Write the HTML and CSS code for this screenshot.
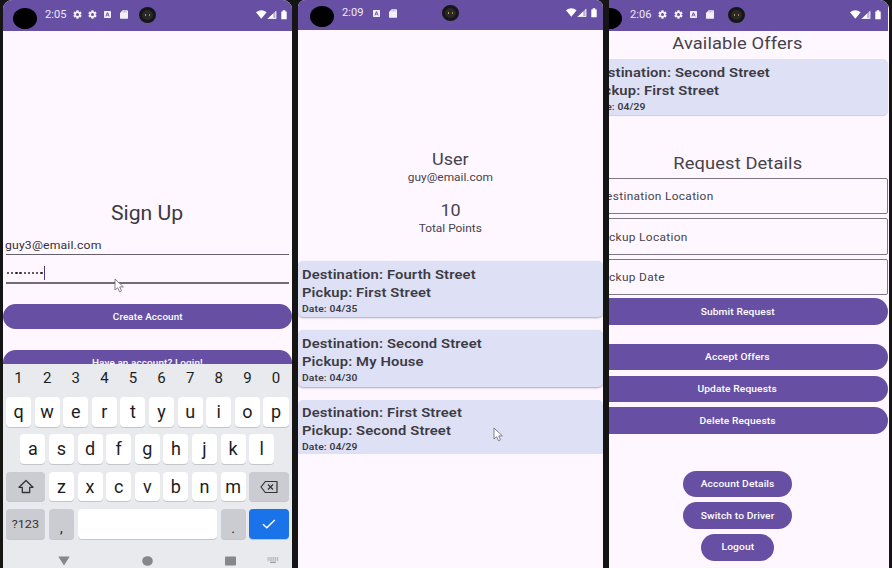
FILE: index.html
```html
<!DOCTYPE html>
<html lang="en">
<head>
<meta charset="utf-8">
<title>Ride share screens</title>
<link rel="stylesheet" href="styles.css">
</head>
<body>
<svg width="0" height="0" class="defs">
  <symbol id="gear" viewBox="1.5 1.5 21 21" preserveAspectRatio="none"><path fill-rule="evenodd" d="M19.400 13a7.500 7.500 0 0 0 0-2l2.100-1.600c.2-.2.2-.4.1-.6l-2-3.500c-.1-.2-.4-.3-.6-.2l-2.500 1a7 7 0 0 0-1.700-1L14.400 2.400a.5.5 0 0 0-.5-.4h-4a.5.5 0 0 0-.5.4L9.100 5.100a7 7 0 0 0-1.700 1l-2.500-1c-.2-.1-.5 0-.6.200l-2 3.500c-.1.200-.1.500.1.600L4.500 11a7.500 7.500 0 0 0 0 2l-2.100 1.600c-.2.200-.2.400-.1.600l2 3.500c.1.200.4.300.6.200l2.500-1a7 7 0 0 0 1.700 1l.3 2.700c0 .2.2.4.5.4h4c.3 0 .5-.2.5-.4l.4-2.700a7 7 0 0 0 1.700-1l2.500 1c.2.100.5 0 .6-.2l2-3.500c.1-.2.100-.5-.1-.6zM12 15.500a3.500 3.500 0 1 1 0-7 3.500 3.500 0 0 1 0 7z"/></symbol>
  <symbol id="badge" viewBox="2 2 20 20" preserveAspectRatio="none"><path fill-rule="evenodd" d="M4 2h16a2 2 0 0 1 2 2v16a2 2 0 0 1-2 2H4a2 2 0 0 1-2-2V4a2 2 0 0 1 2-2zm6.500 4L6 18h2.500l1-3h5l1 3H18L13.500 6zm1.500 3 1.500 4h-3z"/></symbol>
  <symbol id="sd" viewBox="0 0 8 9" preserveAspectRatio="none"><path d="M2.600.3h4.500a.9.900 0 0 1 .9.900v6.700a.9.900 0 0 1-.9.900H.9A.9.900 0 0 1 0 7.900V3z"/><path d="M3 1v1.400M4.500 1v1.400M6 1v1.400" stroke="#6750a4" stroke-width=".4"/></symbol>
  <symbol id="signals" viewBox="0 0 32 10"><path d="M0 2.200Q5.300-1.500 10.600 2.200L5.300 8.800z"/><path d="M11.700 8.800 20.200.5V8.800z" opacity=".55"/><path d="M11.700 8.800 17.200 3.400V8.800zM19.500 1.200h.8v7.600h-.8zM11.700 8h8.500v.8h-8.500z"/><path d="M25.300 1.400h1.400V.3h2.600v1.100h1.400v7.900h-5.400z"/></symbol>
  <symbol id="pointer" viewBox="0 0 11 15"><path d="M1 1v11l2.700-2.300 1.800 4.100 2-.9-1.800-4h3.700z" fill="#fff" stroke="#666" stroke-width=".8"/></symbol>
</svg>

<main class="stage">
  <section class="phone signup">
    <header class="status">
      <i class="hole"></i><span class="clock"><b>2:05</b></span>
      <svg class="ic"><use href="#gear"/></svg><svg class="ic"><use href="#gear"/></svg><svg class="ic small"><use href="#badge"/></svg><svg class="ic sd"><use href="#sd"/></svg>
      <i class="cam"></i><svg class="signals"><use href="#signals"/></svg>
    </header>
    <div class="form">
      <h1><span>Sign Up</span></h1>
      <div class="input email"><span>guy3@email.com</span></div>
      <div class="input password"><i></i><i></i><i></i><i></i><i></i><i></i><i></i><i></i><i></i><em></em></div>
      <button class="btn create"><span>Create Account</span></button>
      <button class="btn"><span>Have an account? Login!</span></button>
    </div>
    <div class="keyboard">
      <div class="row digits"><kbd>1</kbd><kbd>2</kbd><kbd>3</kbd><kbd>4</kbd><kbd>5</kbd><kbd>6</kbd><kbd>7</kbd><kbd>8</kbd><kbd>9</kbd><kbd>0</kbd></div>
      <div class="row"><kbd>q</kbd><kbd>w</kbd><kbd>e</kbd><kbd>r</kbd><kbd>t</kbd><kbd>y</kbd><kbd>u</kbd><kbd>i</kbd><kbd>o</kbd><kbd>p</kbd></div>
      <div class="row middle"><kbd>a</kbd><kbd>s</kbd><kbd>d</kbd><kbd>f</kbd><kbd>g</kbd><kbd>h</kbd><kbd>j</kbd><kbd>k</kbd><kbd>l</kbd></div>
      <div class="row"><kbd class="wide grey"><svg width="18" height="16" viewBox="0 0 18 16"><path d="M9 1.500 2 8.300h3.300v5.200h7.400V8.300H16z" fill="none" stroke="#333" stroke-width="1.300" stroke-linejoin="round"/></svg></kbd><kbd>z</kbd><kbd>x</kbd><kbd>c</kbd><kbd>v</kbd><kbd>b</kbd><kbd>n</kbd><kbd>m</kbd><kbd class="wide grey"><svg width="18" height="14" viewBox="0 0 18 14"><path d="M5.300 1.500H17v11H5.300L1 7zM8 4.500l5 5M13 4.500l-5 5" fill="none" stroke="#333" stroke-width="1.200" stroke-linejoin="round"/></svg></kbd></div>
      <div class="row"><kbd class="wide grey sym"><span>?123</span></kbd><kbd class="grey punct">,</kbd><kbd class="space"></kbd><kbd class="grey punct">.</kbd><kbd class="wide enter"><svg width="14" height="10" viewBox="0 0 14 10"><path d="M1 5.200 4.800 8.700 12.800 1" fill="none" stroke="#fff" stroke-width="1.500"/></svg></kbd></div>
      <nav class="nav">
        <svg width="12" height="10" viewBox="0 0 12 10"><path d="M.3.500h11.400L6 9.600z"/></svg>
        <svg width="11" height="10" viewBox="0 0 11 10"><ellipse cx="5.500" cy="5" rx="5.300" ry="4.800"/></svg>
        <svg width="11" height="10" viewBox="0 0 11 10"><rect y=".5" width="11" height="9" rx=".8"/></svg>
        <svg width="12" height="7" viewBox="0 0 12 7"><path d="M.5 1h11M.5 3h11" stroke="#85878a" stroke-width="1.100" stroke-dasharray="1.200 .7"/><path d="M3 5.300h6" stroke="#85878a"/></svg>
      </nav>
    </div>
    <svg class="pointer one"><use href="#pointer"/></svg>
  </section>

  <section class="phone user">
    <header class="status">
      <i class="hole"></i><span class="clock"><b>2:09</b></span>
      <svg class="ic small"><use href="#badge"/></svg><svg class="ic sd"><use href="#sd"/></svg>
      <i class="cam"></i><svg class="signals"><use href="#signals"/></svg>
    </header>
    <div class="profile">
      <h2><span>User</span></h2>
      <p><span>guy@email.com</span></p>
      <h2><span>10</span></h2>
      <p><span>Total Points</span></p>
    </div>
    <div class="cards">
      <article class="card"><strong>Destination: Fourth Street</strong><strong>Pickup: First Street</strong><small>Date: 04/35</small></article>
      <article class="card"><strong>Destination: Second Street</strong><strong>Pickup: My House</strong><small>Date: 04/30</small></article>
      <article class="card cut"><strong>Destination: First Street</strong><strong>Pickup: Second Street</strong><small>Date: 04/29</small></article>
    </div>
    <svg class="pointer two"><use href="#pointer"/></svg>
  </section>

  <section class="phone offers">
    <div class="screen">
      <header class="status">
        <i class="hole"></i><span class="clock"><b>2:06</b></span>
        <svg class="ic"><use href="#gear"/></svg><svg class="ic"><use href="#gear"/></svg><svg class="ic small"><use href="#badge"/></svg><svg class="ic sd"><use href="#sd"/></svg>
        <i class="cam"></i><svg class="signals"><use href="#signals"/></svg>
      </header>
      <h2 class="avail"><span>Available Offers</span></h2>
      <article class="card"><strong>Destination: Second Street</strong><strong>Pickup: First Street</strong><small>Date: 04/29</small></article>
      <h2 class="request"><span>Request Details</span></h2>
      <div class="fields">
        <div class="field"><span>Destination Location</span></div>
        <div class="field"><span>Pickup Location</span></div>
        <div class="field"><span>Pickup Date</span></div>
      </div>
      <button class="btn submit"><span>Submit Request</span></button>
      <div class="group">
        <button class="btn"><span>Accept Offers</span></button>
        <button class="btn"><span>Update Requests</span></button>
        <button class="btn"><span>Delete Requests</span></button>
      </div>
      <div class="group account">
        <button class="btn"><span>Account Details</span></button>
        <button class="btn"><span>Switch to Driver</span></button>
        <button class="btn logout"><span>Logout</span></button>
      </div>
    </div>
  </section>
</main>
</body>
</html>
```
FILE: styles.css
```css
* { box-sizing: border-box; }
body { margin: 0; background: #151516; font-family: Roboto, sans-serif; color: #46434b; }
h1, h2, p { margin: 0; font-weight: 400; text-align: center; }
.defs { display: block; position: absolute; }
.stage {
  display: grid; grid-template-columns: 289px 304.500px 280px; column-gap: 6.400px;
  width: 892px; height: 568px; padding-left: 3px; overflow: hidden;
}
.phone { position: relative; height: 568px; overflow: hidden; background: #fef7ff; border-radius: 9px 9px 0 0; }
.user { border-radius: 7px 7px 0 0; }
.offers { border-radius: 0 9px 0 0; margin-left: -.7px; }
.screen { width: 302px; margin-left: -22.200px; }

.btn span, .sym span { display: inline-block; transform: scaleX(1.100); }
h1 span, h2 span, p span { display: inline-block; transform: scaleX(1.060); }
.profile p span { transform: scaleX(1.080); }
.field span, .email span, .clock b, .card strong, .card small { display: inline-block; transform: scaleX(1.110); transform-origin: left center; }

.status { position: relative; display: flex; align-items: center; height: 31px; background: #6750a4; padding: 0 4px 2px 10px; }
.user .status { height: 30px; padding: 0 5px 4px 12px; }
.offers .status { padding: 0 6px 2px 11.500px; }
.hole { width: 24px; height: 21px; border-radius: 50%; background: #000; margin-top: 7px; flex: none; }
.clock { width: 22px; margin-left: 8px; color: #eee9f7; font-size: 10px; line-height: 12px; }
.clock b { font-weight: 400; }
.ic { width: 9px; height: 9px; margin-left: 6.700px; fill: #f3effa; flex: none; }
.ic.small { width: 7px; height: 7px; margin-left: 7.300px; }
.clock + .ic { margin-left: 5.500px; }
.offers .clock + .ic { margin-left: 6.500px; }
.clock + .ic.small { margin-left: 9px; }
.ic.sd { width: 8px; height: 9px; margin-left: 8.500px; }
.signals { width: 32px; height: 10px; margin-left: auto; fill: #fff; }
.cam { position: absolute; left: 50%; top: 7px; width: 17px; height: 16px; margin-left: -9px; border-radius: 50%; border: 3px solid #161616; background: radial-gradient(circle at 3.500px 5px, #b29869 0 .5px, transparent 1px), radial-gradient(circle at 7.500px 5px, #bb7656 0 .5px, transparent 1px), #292929; }
.user .cam { top: 5px; }

.btn { display: flex; align-items: center; justify-content: center; width: 100%; height: 26.300px; padding: 0; border: 0; border-radius: 14px; background: #6750a4; color: #fff; font: 500 9.300px/12px Roboto, sans-serif; letter-spacing: .1px; }

.form { padding-top: 169.500px; height: 333px; overflow: hidden; }
.form h1 { font-size: 20px; line-height: 25px; color: #3c3a42; }
.input { margin: 0 3px; }
.email { height: 29.500px; padding-top: 13.500px; border-bottom: 1px solid #65606c; color: #333037; font-size: 11px; line-height: 14px; letter-spacing: .15px; }
.email span { margin-left: -.8px; }
.password { display: flex; align-items: center; height: 29px; padding-top: 9px; border-bottom: 2px solid #716c78; }
.password i { width: 2.400px; height: 2.400px; border-radius: 50%; background: #29272e; margin: 0 .9px; }
.password em { width: 1px; height: 14px; background: #4f378b; }
.form .btn { height: 25px; font-size: 9px; padding-top: 1px; }
.form .create { margin: 19.500px 0 21px; }

.keyboard { position: relative; height: 205px; padding: 3px 3px 0; background: #e8eaed; color: #1c1d1f; }
.row { display: flex; gap: 3.570px; height: 29.600px; margin-bottom: 7.800px; }
.row.digits { height: 22px; margin-bottom: 8px; }
.middle { padding: 0 14.300px; }
kbd { display: flex; align-items: center; justify-content: center; flex: 0 0 25.050px; height: 100%; border-radius: 4px; background: #fff; box-shadow: 0 1px 0 #c3c5c9; font: 400 18px/20px Roboto, sans-serif; }
.digits kbd { background: none; box-shadow: none; font-size: 15px; }
kbd.wide { flex-basis: 39.400px; }
kbd.grey { background: #cbccd2; }
kbd.space { flex-basis: 139.500px; }
kbd.sym { font-size: 11.500px; color: #333; }
kbd.punct { font-size: 14px; padding-top: 8px; }
kbd.enter { background: #1a73e8; }
.nav { display: flex; align-items: center; height: 14px; margin-top: 15px; padding-left: 52px; fill: #85878a; }
.nav svg:nth-child(2), .nav svg:nth-child(3) { margin-left: 72px; }
.nav svg:nth-child(4) { margin-left: 31px; }

.profile { padding-top: 119px; height: 231px; }
.profile h2 { font-size: 17px; line-height: 20px; }
.profile p { font-size: 11px; line-height: 17px; height: 30.500px; }
.cards { display: flex; flex-direction: column; gap: 13.300px; }
.card { display: flex; flex-direction: column; align-items: flex-start; height: 56.200px; padding: 4.500px 4px 0; border-radius: 5px; background: #dee1f5; box-shadow: 0 1px 2px #aaa8b5; color: #3d3b44; }
.card strong { font-size: 13.300px; line-height: 18px; letter-spacing: .12px; white-space: nowrap; font-weight: 600; }
.card small { font-size: 9.300px; line-height: 13px; font-weight: 600; letter-spacing: .12px; }
.card.cut { height: 54px; border-radius: 5px 5px 0 0; box-shadow: none; }

.offers h2 { font-size: 17.300px; line-height: 24px; letter-spacing: .1px; }
.avail { height: 28px; }
.offers .card { box-shadow: 0 1px 1px #cfcddc; }
.offers .card strong { margin-left: -.5px; }
.request { margin-top: 36px; height: 26.500px; }
.fields { display: flex; flex-direction: column; gap: 4px; }
.field { display: flex; align-items: center; height: 36.600px; padding: 1px 0 0 10.500px; border: 1px solid #7d7785; border-radius: 2px; font-size: 10.700px; letter-spacing: .3px; }
.submit { margin-top: 3px; }
.group { display: flex; flex-direction: column; align-items: center; gap: 5.500px; margin-top: 19px; }
.account { margin-top: 37px; }
.account .btn { width: 109px; }
.account .logout { width: 73.500px; }

.pointer { position: absolute; width: 11px; height: 15px; }
.one { left: 111px; top: 278px; }
.two { left: 195px; top: 427px; }
```
